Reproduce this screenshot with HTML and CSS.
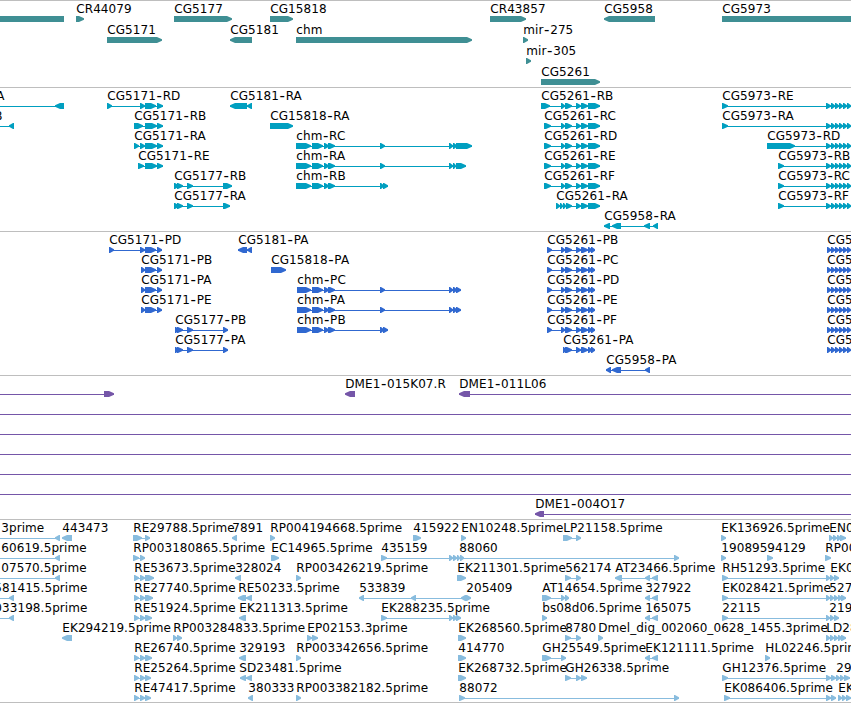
FILE: index.html
```html
<!DOCTYPE html>
<html lang="en">
<head>
<meta charset="utf-8">
<title>Genome browser</title>
<link rel="stylesheet" href="styles.css">
</head>
<body>
<main class="browser">
  <section class="track genes" id="genes"></section>
  <section class="track transcripts" id="transcripts"></section>
  <section class="track proteins" id="proteins"></section>
  <section class="track clones" id="clones"></section>
  <section class="track ests" id="ests"></section>
</main>
<script src="tracks.js"></script>
</body>
</html>
```
FILE: styles.css
```css
body {
  margin: 0;
  background: #fff;
}

.browser {
  display: flex;
  flex-direction: column;
  width: 851px;
  height: 703px;
  overflow: hidden;
}

.track {
  box-sizing: border-box;
  flex: none;
  height: 144px;
  border-top: 1px solid #bebebe;
  overflow: hidden;
}

.track svg {
  display: block;
  width: 851px;
  height: 100%;
}

.track text {
  font: 12px "DejaVu Sans", sans-serif;
  letter-spacing: 0.07px;
  fill: #000;
}

.track .dash {
  font-size: 15px;
}

.genes { height: 87px; color: #3f8f94; }
.transcripts { color: #009fc0; }
.proteins { color: #3068d0; }
.clones { color: #7556a8; }
.ests { height: 184px; color: #88bcde; border-bottom: 1px solid #bebebe; }
```
FILE: tracks.js
```js
// One feature per line: row | label | label x | direction | exons | optional line extent
const exons5261 = "561-565 565-572 576-581 581-588 588-600";
const cds5261 = "561-565 565-572 576-581 581-588 588-592 591-595";
const exons5973 = "826-831 831-835 835-839 839-843 843-847 847-851";
const cds5973 = "827-831 831-835 835-839 839-843 843-847 847-851";
const chmStart = "312-323 324-329 328-335";

const tracks = {
  genes: { pitch: 21, features: `
0||0|<|-20-64
0|CR44079|76|>|76-84
0|CG5177|174|>|174-232
0|CG15818|270|>|270-293
0|CR43857|490|>|490-526
0|CG5958|604|<|604-655
0|CG5973|722|>|722-900
1|CG5171|107|>|107-162
1|CG5181|230|<|230-252
1|chm|296|>|296-472
1|mir-275|523|>|523-528
2|mir-305|526|>|526-531
3|CG5261|541|>|541-600` },

  transcripts: { pitch: 20, features: `
0|A|-4|<|55-64|-10-64
0|CG5171-RD|107|>|107-112 140-145 145-156 157-163
0|CG5181-RA|230|<|230-247 247-252
0|CG5261-RB|541|>|541-550 ${exons5261}
0|CG5973-RE|722|>|722-728 ${exons5973}
1|B|-6|<|9-14|-10-14
1|CG5171-RB|134|>|134-143 145-157 157-163
1|CG15818-RA|270|>|270-293
1|CG5261-RC|544|>|544-551 ${exons5261}
1|CG5973-RA|722|>|722-728 ${exons5973}
2|CG5171-RA|134|>|134-139 140-145 145-157 157-163
2|chm-RC|296|>|296-311 ${chmStart} 380-385 449-453 453-457 456-472
2|CG5261-RD|544|>|544-551 ${exons5261}
2|CG5973-RD|767|>|767-795 ${exons5973}
3|CG5171-RE|138|>|138-144 145-157 157-163
3|chm-RA|296|>|296-311 ${chmStart} 380-385 449-453 453-456 456-466
3|CG5261-RE|544|>|544-551 ${exons5261}
3|CG5973-RB|778|>|778-784 ${exons5973}
4|CG5177-RB|174|>|174-179 177-183 187-193 223-232
4|chm-RB|296|>|296-311 ${chmStart} 380-384 383-388
4|CG5261-RF|544|>|544-551 ${exons5261}
4|CG5973-RC|778|>|778-784 ${exons5973}
5|CG5177-RA|174|>|174-179 177-183 187-193 223-230
5|CG5261-RA|556|>|556-560 560-563 563-566 566-572 576-581 581-588 588-600
5|CG5973-RF|778|>|778-784 ${exons5973}
6|CG5958-RA|604|<|604-610 612-621 644-650 653-658` },

  proteins: { pitch: 20, features: `
0|CG5171-PD|109|>|109-114 140-145 145-156 157-162
0|CG5181-PA|238|<|238-247 247-252
0|CG5261-PB|547|>|547-552 ${cds5261}
0|CG5|827|>|${cds5973}
1|CG5171-PB|141|>|141-145 145-156 157-162
1|CG15818-PA|271|>|271-286
1|CG5261-PC|547|>|547-552 ${cds5261}
1|CG5|827|>|${cds5973}
2|CG5171-PA|141|>|141-145 145-156 157-162
2|chm-PC|297|>|297-311 ${chmStart} 380-385 449-453 453-457 456-461
2|CG5261-PD|547|>|547-552 ${cds5261}
2|CG5|827|>|${cds5973}
3|CG5171-PE|141|>|141-145 145-156 157-162
3|chm-PA|297|>|297-311 ${chmStart} 380-385 449-453 453-457 456-461
3|CG5261-PE|547|>|547-552 ${cds5261}
3|CG5|827|>|${cds5973}
4|CG5177-PB|175|>|175-179 177-183 187-193 223-228
4|chm-PB|297|>|297-311 ${chmStart} 380-384 383-388
4|CG5261-PF|547|>|547-552 ${cds5261}
4|CG5|827|>|${cds5973}
5|CG5177-PA|175|>|175-179 177-183 187-193 223-228
5|CG5261-PA|563|>|563-566 565-572 576-581 581-588 588-592 591-595
5|CG5|827|>|${cds5973}
6|CG5958-PA|606|<|606-611 612-621 645-650` },

  clones: { pitch: 20, features: `
0||0|>|104-114|-10-114
0|DME1-015K07.R|345|<|345-355
0|DME1-011L06|459|<|459-470|459-860
1||0|>||-10-860
2||0|>||-10-860
3||0|>||-10-860
4||0|>||-10-860
5||0|>||-10-860
6|DME1-004O17|535|<|535-544|535-860` },

  ests: { pitch: 20, features: `
0|3prime|1|<|55-60|-10-60
0|443473|62|<|62-72
0|RE29788.5prime|133|>|133-142 145-150
0|7891|232|<|232-237
0|RP004194668.5prime|270|>|270-275
0|415922|413|>|413-421
0|EN10248.5prime|461|>|461-466
0|LP21158.5prime|563|>|563-572 576-581
0|EK136926.5prime|721|>|721-726
0|EN0|829|>|829-833 833-837 837-841 840-846
1|60619.5prime|1|<|55-60|-10-60
1|RP003180865.5prime|133|>|133-139 140-145
1|EC14965.5prime|271|>|271-279
1|435159|381|>|381-387 449-453 453-457 457-460 460-464
1|88060|459|>|674-679|459-679
1|190895|721|>|721-726
1|94129|767|>|767-773
1|RP00|825|>|825-831
2|07570.5prime|1|<|55-60|-10-60
2|RE53673.5prime|134|>|134-139 140-145 145-154
2|328024|235|<|235-241
2|RP003426219.5prime|296|>|296-301
2|EK211301.5prime|457|>|457-466
2|562174|565|>|565-571 576-581
2|AT23466.5prime|615|<|615-622 645-650 652-658
2|RH51293.5prime|722|>|722-728 826-830 830-834 834-839
2|EK0|830|>||
3|581415.5prime|-6|<|9-14|-10-14
3|RE27740.5prime|134|>|134-139 140-145 145-153
3|RE50233.5prime|238|<|238-246 246-252
3|533839|359|<|359-364 411-416 461-466
3|205409|466|>|466-471
3|AT14654.5prime|542|>|542-551 561-565 565-569
3|327922|645|<|645-650 652-658
3|EK028421.5prime|722|>|722-728 826-830 830-834 834-838 838-842 841-846
3|527|829|>||
4|033198.5prime|-6|<|9-14|-10-14
4|RE51924.5prime|134|>|134-139 140-145 145-152
4|EK211313.5prime|239|<|239-246
4|EK288235.5prime|381|>|381-387 449-453 453-457 456-461
4|bs08d06.5prime|542|>|542-547
4|165075|645|<|645-650 652-658
4|22115|722|>|722-728 826-830 830-834 834-839
4|219|829|>||
5|EK294219.5prime|62|<|62-72
5|RP003284833.5prime|173|>|173-177 177-182
5|EP02153.3prime|307|>|307-312 312-318
5|EK268560.5prime|458|>|458-466
5|8780|565|>|565-571 576-581
5|Dmel_dig_002060_0628_1455.3prime|598|>|598-603
5|LD28|826|>|826-830 830-834 834-838 838-842 841-846
6|RE26740.5prime|134|>|134-139 140-145 145-152
6|329193|239|<|239-246
6|RP003342656.5prime|296|>|296-301
6|414770|458|>|458-466
6|GH25549.5prime|542|>|542-551 561-566
6|EK121111.5prime|645|<|645-650 652-658
6|HL02246.5prime|765|>|765-770
7|RE25264.5prime|134|>|134-139 140-145 145-151
7|SD23481.5prime|239|<|240-246 246-252
7|EK268732.5prime|458|>|458-466
7|GH26338.5prime|565|>|565-571 576-581 581-587
7|GH12376.5prime|722|>|722-728 826-831 831-836
7|29|836|>|836-840 840-844 844-850
8|RE47417.5prime|134|>|134-139 140-145 145-151
8|380333|248|<|248-253
8|RP003382182.5prime|296|>|296-301
8|88072|459|>|459-465 674-679
8|EK086406.5prime|724|>|724-730 826-831 831-836
8|EK|838|>|838-842 842-846 846-851` }
};

function span(text) {
  const m = text.match(/^(-?\d+)-(\d+)$/);
  return [Number(m[1]), Number(m[2])];
}

function exonPath([a, b], dir, y) {
  const head = Math.min(6, b - a);
  const open = dir === "<" && a < 0 || dir === ">" && b > 860;
  if (open || a < 0) return `M${a} ${y}H${b}V${y + 6}H${a}Z`;
  return dir === ">"
    ? `M${a} ${y}H${b - head + 1}L${b} ${y + 2.2}V${y + 3.8}L${b - head + 1} ${y + 6}H${a}Z`
    : `M${b} ${y}H${a + head - 1}L${a} ${y + 2.2}V${y + 3.8}L${a + head - 1} ${y + 6}H${b}Z`;
}

for (const [id, track] of Object.entries(tracks)) {
  let out = "";
  for (const line of track.features.trim().split("\n")) {
    const [row, label, x, dir, exonText, extent] = line.split("|");
    const top = row * track.pitch;
    const exons = exonText ? exonText.split(" ").map(span) : [];
    const range = extent ? span(extent)
      : exons.length > 1 ? [exons[0][0], exons[exons.length - 1][1]] : null;
    if (range) {
      out += `<rect x="${range[0]}" y="${top + 18}" width="${range[1] - range[0]}" height="1" fill="currentColor"/>`;
    }
    for (const exon of exons) {
      out += `<path fill="currentColor" d="${exonPath(exon, dir, top + 15)}"/>`;
    }
    if (label) {
      const content = label.replace(/-(.)/, '<tspan class="dash" dx="0.6" dy="0.7">-</tspan><tspan dx="0.6" dy="-0.7">$1</tspan>');
      out += `<text x="${Number(x) + 0.3}" y="${top + 12}">${content}</text>`;
    }
  }
  document.getElementById(id).innerHTML = `<svg>${out}</svg>`;
}
```
